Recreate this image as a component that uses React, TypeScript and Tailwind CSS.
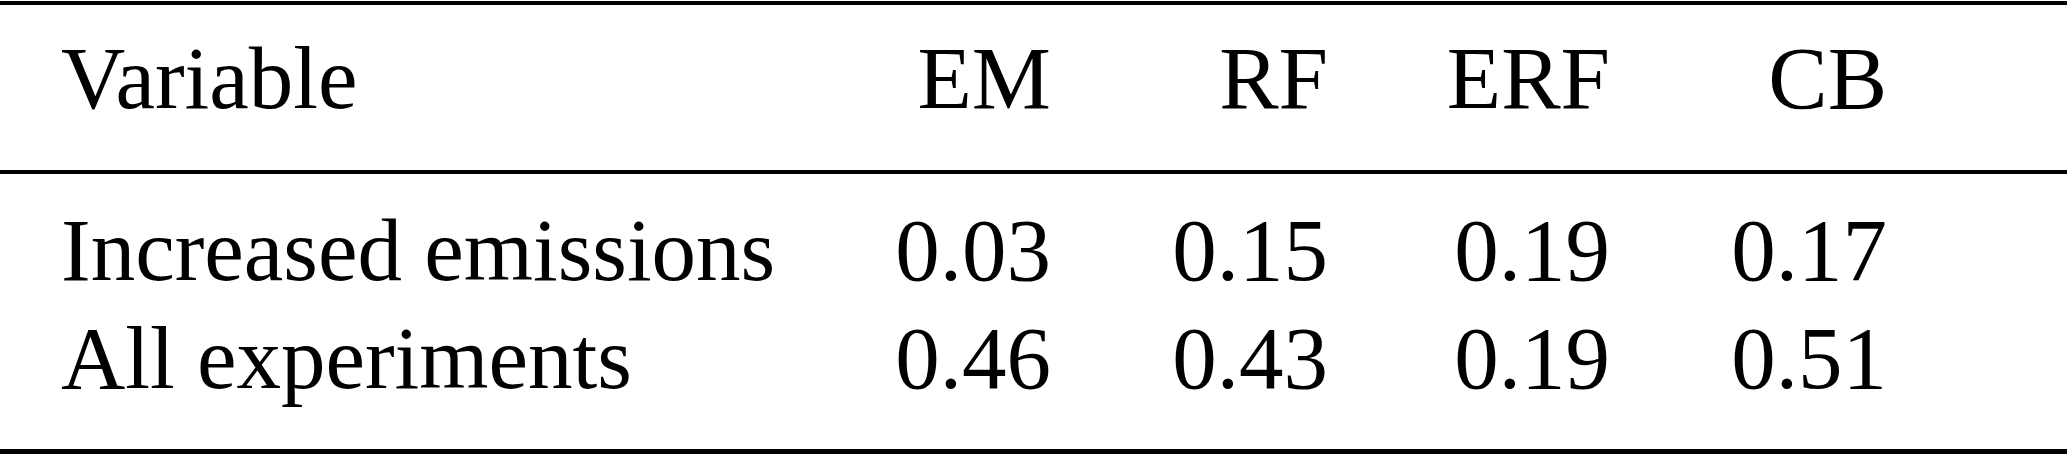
import React from "react";

const rows = [
  { name: "Increased emissions", values: ["0.03", "0.15", "0.19", "0.17"] },
  { name: "All experiments", values: ["0.46", "0.43", "0.19", "0.51"] },
];

const headers = ["EM", "RF", "ERF", "CB"];

const gridCols = "grid grid-cols-[870px_181px_277px_282px_277px_1fr]";

const App = () => {
  return (
    <div className="w-[2067px] h-[454px] bg-white text-black font-['Liberation_Serif',serif] text-[89px] leading-[108px] overflow-hidden">
      <div className="mt-px h-[4px] bg-black" />
      <div className={`${gridCols} pt-[19px]`}>
        <div className="pl-[61px] whitespace-nowrap">Variable</div>
        {headers.map((h) => (
          <div key={h} className="text-right whitespace-nowrap">
            {h}
          </div>
        ))}
        <div />
      </div>
      <div className="mt-[38px] h-[4px] bg-black" />
      <div className="pt-[22px]">
        {rows.map((row) => (
          <div key={row.name} className={gridCols}>
            <div className="pl-[61px] whitespace-nowrap">{row.name}</div>
            {row.values.map((v, i) => (
              <div key={i} className="text-right whitespace-nowrap">
                {v}
              </div>
            ))}
            <div />
          </div>
        ))}
      </div>
      <div className="mt-[37px] h-[5px] bg-black" />
    </div>
  );
};

export default App;
